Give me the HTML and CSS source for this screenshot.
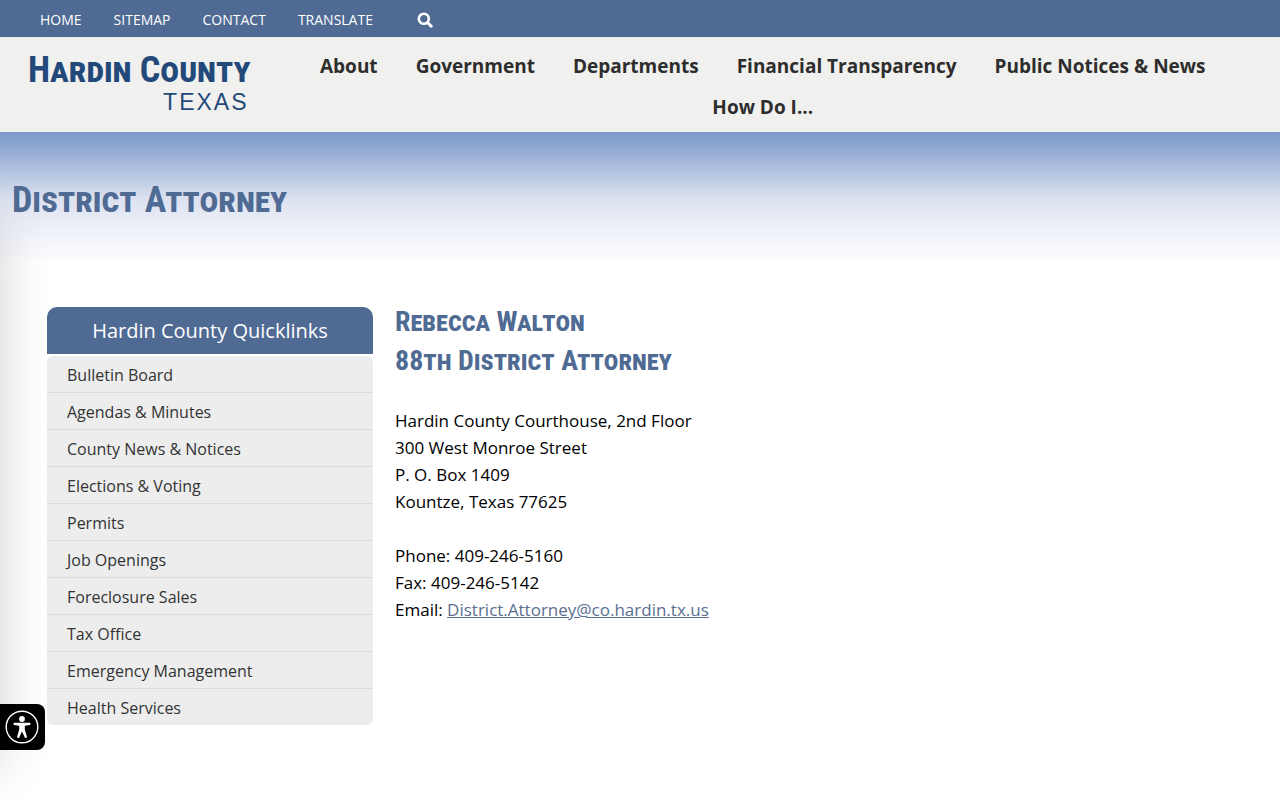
FILE: index.html
```html
<!DOCTYPE html>
<html lang="en">

<head>
    <meta charset="UTF-8">
    <meta name="viewport" content="width=device-width, initial-scale=1.0">
    <title>District Attorney - Hardin County, Texas</title>
    <link rel="stylesheet" href="styles.css">
</head>

<body>

    <div class="topbar">
        <a href="#">HOME</a>
        <a href="#">SITEMAP</a>
        <a href="#">CONTACT</a>
        <a href="#">TRANSLATE</a>
        <button class="search-button" aria-label="Search">
            <svg viewBox="0 0 16 16" width="16" height="16">
                <circle cx="6.8" cy="6.8" r="5" fill="none" stroke="#fff" stroke-width="2.6"/>
                <path d="M10.7 10.7L14.2 14.2" stroke="#fff" stroke-width="3" stroke-linecap="round"/>
            </svg>
        </button>
    </div>

    <header class="header">
        <a class="logo" href="#">
            <span class="logo-name">Hardin County</span>
            <span class="logo-state">TEXAS</span>
        </a>
        <nav class="main-nav">
            <a href="#">About</a>
            <a href="#">Government</a>
            <a href="#">Departments</a>
            <a href="#">Financial Transparency</a>
            <a href="#">Public Notices &amp; News</a>
            <a href="#">How Do I...</a>
        </nav>
    </header>

    <div class="banner">
        <h1>District Attorney</h1>
    </div>

    <main class="content">
        <aside class="quicklinks">
            <h2>Hardin County Quicklinks</h2>
            <ul>
                <li><a href="#">Bulletin Board</a></li>
                <li><a href="#">Agendas &amp; Minutes</a></li>
                <li><a href="#">County News &amp; Notices</a></li>
                <li><a href="#">Elections &amp; Voting</a></li>
                <li><a href="#">Permits</a></li>
                <li><a href="#">Job Openings</a></li>
                <li><a href="#">Foreclosure Sales</a></li>
                <li><a href="#">Tax Office</a></li>
                <li><a href="#">Emergency Management</a></li>
                <li><a href="#">Health Services</a></li>
            </ul>
        </aside>

        <section class="details">
            <h2>Rebecca Walton<br>88th District Attorney</h2>
            <p>
                Hardin County Courthouse, 2nd Floor<br>
                300 West Monroe Street<br>
                P. O. Box 1409<br>
                Kountze, Texas 77625
            </p>
            <p>
                Phone: 409-246-5160<br>
                Fax: 409-246-5142<br>
                Email: <a href="mailto:District.Attorney@co.hardin.tx.us">District.Attorney@co.hardin.tx.us</a>
            </p>
        </section>
    </main>

    <!-- accessibility menu, closed: only its shadow and button show -->
    <div class="access-panel"></div>
    <button class="access-button" aria-label="Accessibility">
        <svg viewBox="0 0 34 34" width="34" height="34">
            <circle cx="17" cy="17" r="15.8" fill="none" stroke="#fff" stroke-width="1.4"/>
            <circle cx="17" cy="9" r="2.9" fill="#fff"/>
            <path d="M9 12.8H25Q26.4 14 25 15L19.8 15.8V19.5L22 27Q21 28.8 19.8 27.4L17 21.6L14.2 27.4Q13 28.8 12 27L14.2 19.5V15.8L9 15Q7.6 14 9 12.8Z" fill="#fff"/>
        </svg>
    </button>

</body>

</html>
```

FILE: styles.css
```css
* {
    box-sizing: border-box;
}

body {
    margin: 0;
    background-color: #fff;
    color: #000;
    font-family: "Segoe UI", "Open Sans", "Noto Sans", sans-serif;
    font-size: 17px;
    line-height: 27px;
}

h1, h2, p, ul {
    margin: 0;
    padding: 0;
}

a {
    text-decoration: none;
}

.topbar {
    display: flex;
    align-items: center;
    gap: 32px;
    height: 37px;
    padding: 2px 40px 0;
    background-color: #4f6a93;
    font-size: 14px;
}

.topbar a {
    color: #fff;
}

.search-button {
    display: flex;
    margin-left: 12px;
    padding: 0;
    border: none;
    background: none;
    cursor: pointer;
}

.header {
    display: flex;
    min-height: 95px;
    padding: 9px 47px 0 28px;
    background-color: #f0f0ee;
}

.logo {
    display: flex;
    flex-direction: column;
    align-items: flex-end;
    flex-shrink: 0;
    color: #23497a;
}

.logo-name {
    font-family: "Roboto Condensed", "Lato", sans-serif;
    font-variant: small-caps;
    font-weight: bold;
    font-size: 36px;
    line-height: 48px;
}

.logo-state {
    padding-right: 2px;
    font-family: "Liberation Sans", sans-serif;
    font-size: 23px;
    line-height: 16px;
    letter-spacing: 2px;
}

.main-nav {
    display: flex;
    flex: 1;
    flex-wrap: wrap;
    justify-content: center;
    align-content: flex-start;
    column-gap: 38px;
    margin-left: 42px;
}

.main-nav a {
    color: #2d2d2d;
    font-size: 19px;
    font-weight: bold;
    line-height: 41px;
}

.banner {
    height: 133px;
    padding: 40px 12px 0;
    background: linear-gradient(#7c99c9, #8ba4d1 9%, #b3c3e0 30%, #dce1f0 50%, #edf0f8 72%, #fff);
}

.banner h1 {
    color: #4f6a93;
    font-family: "Roboto Condensed", "Lato", sans-serif;
    font-variant: small-caps;
    font-size: 36px;
    line-height: 56px;
}

.content {
    display: flex;
    gap: 22px;
    padding: 37px 47px;
}

.quicklinks {
    width: 326px;
    flex-shrink: 0;
    margin-top: 5px;
}

.quicklinks h2 {
    padding: 10px;
    border-radius: 10px 10px 0 0;
    background-color: #4f6a93;
    color: #fff;
    font-size: 20px;
    font-weight: normal;
    line-height: 27px;
    text-align: center;
}

.quicklinks ul {
    margin-top: 2px;
    border-radius: 6px;
    background-color: #ededed;
    list-style: none;
}

.quicklinks li a {
    display: block;
    padding: 6px 20px 4px;
    color: #333;
    font-size: 16px;
    line-height: 26px;
}

.quicklinks li + li {
    border-top: 1px solid #dcdcdc;
}

.details h2 {
    margin-bottom: 27px;
    color: #4f6a93;
    font-family: "Roboto Condensed", "Lato", sans-serif;
    font-variant: small-caps;
    font-size: 28px;
    line-height: 39px;
}

.details p {
    margin-bottom: 27px;
}

.details a {
    color: #5a6f91;
    text-decoration: underline;
}

.access-panel {
    position: fixed;
    left: -300px;
    top: 225px;
    bottom: 35px;
    width: 300px;
    box-shadow: 0 0 48px rgba(0, 0, 0, 0.18);
}

.access-button {
    position: fixed;
    left: 0;
    bottom: 50px;
    display: flex;
    padding: 6px 6px 6px 5px;
    border: none;
    border-radius: 0 8px 8px 0;
    background-color: #000;
    cursor: pointer;
}
```
